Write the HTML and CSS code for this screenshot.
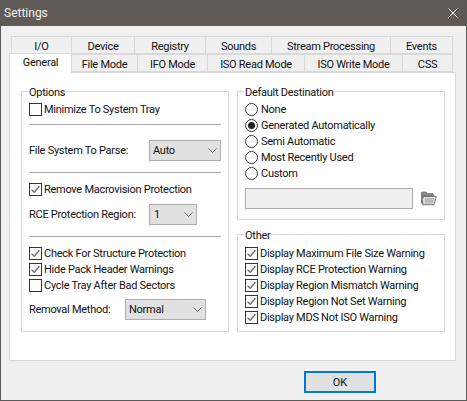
FILE: index.html
```html
<!DOCTYPE html>
<html lang="en">
<head>
  <meta charset="UTF-8" />
  <meta name="viewport" content="width=device-width, initial-scale=1.0" />
  <title>Settings</title>
  <link rel="stylesheet" href="styles.css">
</head>
<body>
  <svg class="defs" width="0" height="0">
    <symbol id="check" viewBox="0 0 11 11">
      <path d="M1.5 5.5 L4.2 8.2 L9.5 2" fill="none" stroke="#6d6d6d" stroke-width="1.3" />
    </symbol>
    <symbol id="chevron" viewBox="0 0 9 5">
      <path d="M0.5 0.5 L4.5 4.5 L8.5 0.5" fill="none" stroke="#666" stroke-width="1" />
    </symbol>
  </svg>
  <div class="window">
    <div class="titlebar">
      <span>Settings</span>
      <svg class="close" width="10" height="10" viewBox="0 0 10 10">
        <path d="M0.5 0.5 L9.5 9.5 M9.5 0.5 L0.5 9.5" stroke="#fff" stroke-width="1" />
      </svg>
    </div>
    <div class="client">
      <div class="tabs">
        <div class="tab-row row-back">
          <div class="tab w-io">I/O</div>
          <div class="tab w-device">Device</div>
          <div class="tab w-registry">Registry</div>
          <div class="tab w-sounds">Sounds</div>
          <div class="tab w-stream">Stream Processing</div>
          <div class="tab w-events">Events</div>
        </div>
        <div class="tab-row row-front">
          <div class="tab selected">General</div>
          <div class="tab w-file">File Mode</div>
          <div class="tab w-ifo">IFO Mode</div>
          <div class="tab w-read">ISO Read Mode</div>
          <div class="tab w-write">ISO Write Mode</div>
          <div class="tab w-css">CSS</div>
        </div>
      </div>
      <div class="panel">
        <fieldset class="group options">
          <legend>Options</legend>
          <div class="check first"><span class="box"></span>Minimize To System Tray</div>
          <hr class="sep sep-1">
          <div class="field field-fs">
            <span class="field-label">File System To Parse:</span>
            <div class="combo combo-fs">Auto<svg class="chev"><use href="#chevron" /></svg></div>
          </div>
          <hr class="sep sep-2">
          <div class="check check-macro"><span class="box"><svg><use href="#check" /></svg></span>Remove Macrovision Protection</div>
          <div class="field field-rce">
            <span class="field-label">RCE Protection Region:</span>
            <div class="combo combo-rce">1<svg class="chev"><use href="#chevron" /></svg></div>
          </div>
          <hr class="sep sep-3">
          <div class="check"><span class="box"><svg><use href="#check" /></svg></span>Check For Structure Protection</div>
          <div class="check"><span class="box"><svg><use href="#check" /></svg></span>Hide Pack Header Warnings</div>
          <div class="check"><span class="box"></span>Cycle Tray After Bad Sectors</div>
          <div class="field field-removal">
            <span class="field-label">Removal Method:</span>
            <div class="combo combo-removal">Normal<svg class="chev"><use href="#chevron" /></svg></div>
          </div>
        </fieldset>
        <div class="right-col">
          <fieldset class="group destination">
            <legend>Default Destination</legend>
            <div class="check first"><span class="radio"></span>None</div>
            <div class="check"><span class="radio on"></span>Generated Automatically</div>
            <div class="check"><span class="radio"></span>Semi Automatic</div>
            <div class="check"><span class="radio"></span>Most Recently Used</div>
            <div class="check"><span class="radio"></span>Custom</div>
            <div class="path-row">
              <div class="path-box"></div>
              <svg class="folder" width="17" height="15" viewBox="0 0 17 15">
                <path d="M1 3 L2 1 H6 L7.5 2.5 H13 L14 5 H3 Z" fill="#8c8c8c" stroke="#666" stroke-width="0.7" />
                <path d="M1 3 V12 L3 14 H13 L13.5 5 Z" fill="#7d7d7d" />
                <path d="M4 5.5 H16.3 L14 13.7 H3 L2 8 Z" fill="#dcdcdc" stroke="#6a6a6a" stroke-width="0.8" />
                <path d="M5 7 H14.5 L13 12.5 H5 Z" fill="#bdbdbd" />
              </svg>
            </div>
          </fieldset>
          <fieldset class="group other">
            <legend>Other</legend>
            <div class="check first-other"><span class="box"><svg><use href="#check" /></svg></span>Display Maximum File Size Warning</div>
            <div class="check"><span class="box"><svg><use href="#check" /></svg></span>Display RCE Protection Warning</div>
            <div class="check"><span class="box"><svg><use href="#check" /></svg></span>Display Region Mismatch Warning</div>
            <div class="check"><span class="box"><svg><use href="#check" /></svg></span>Display Region Not Set Warning</div>
            <div class="check"><span class="box"><svg><use href="#check" /></svg></span>Display MDS Not ISO Warning</div>
          </fieldset>
        </div>
      </div>
      <div class="footer">
        <button type="button" class="ok">OK</button>
      </div>
    </div>
  </div>
</body>
</html>
```

FILE: styles.css
```css
* {
  box-sizing: border-box;
}
html, body {
  margin: 0;
  padding: 0;
}
body {
  width: 467px;
  height: 401px;
  overflow: hidden;
  font-family: Roboto, sans-serif;
  font-size: 11px;
  letter-spacing: -0.27px;
  color: #111;
}
.defs {
  display: block;
  height: 0;
}
.window {
  width: 467px;
  height: 401px;
  display: flex;
  flex-direction: column;
  border: 1px solid #5d5955;
  border-top: 0;
  background-color: #f0f0f0;
}
.titlebar {
  height: 26px;
  background-color: #5f5a55;
  color: #f2f2f2;
  font-size: 12px;
  letter-spacing: 0;
  display: flex;
  align-items: center;
  justify-content: space-between;
  padding: 0 8px 0 3px;
  flex: none;
}
.client {
  padding: 10px 10px 0 8px;
}

/* tabs */
.tabs {
  height: 36px;
}
.tab-row {
  display: flex;
  height: 18px;
}
.row-back {
  padding-left: 2px;
}
.row-front {
  height: 20px;
  margin-top: -2px;
  align-items: flex-end;
}
.tab {
  height: 18px;
  background-color: #f0f0f0;
  border: 1px solid #d9d9d9;
  border-left: 0;
  display: flex;
  align-items: center;
  justify-content: center;
  padding-top: 3px;
}
.row-back .tab:first-child {
  border-left: 1px solid #d9d9d9;
}
.tab.selected {
  width: 63px;
  height: 20px;
  background-color: #fff;
  border: 1px solid #d9d9d9;
  border-bottom: 0;
  position: relative;
  z-index: 1;
  margin-bottom: -1px;
  padding: 0 0 3px 0;
}
.w-io { width: 61px; }
.w-device { width: 63px; }
.w-registry { width: 71px; }
.w-sounds { width: 66px; }
.w-stream { width: 119px; }
.w-events { width: 62px; }
.w-file { width: 66px; }
.w-ifo { width: 70px; }
.w-read { width: 97px; }
.w-write { width: 98px; }
.w-css { width: 50px; }

/* main panel */
.panel {
  width: 447px;
  height: 289px;
  background-color: #fff;
  border: 1px solid #d9d9d9;
  padding: 9px 10px 0 11px;
  display: flex;
  gap: 8px;
  align-items: flex-start;
}
.group {
  margin: 0;
  width: 208px;
  border: 1px solid #d9d9d9;
  padding: 0 7px;
  min-width: 0;
}
.group legend {
  padding: 4px 1px 0;
  margin-left: -1px;
  line-height: 14px;
}
.options {
  height: 250px;
}
.right-col {
  display: flex;
  flex-direction: column;
  gap: 5px;
}
.destination {
  height: 138px;
}
.other {
  height: 107px;
}
.check {
  display: flex;
  align-items: center;
  height: 16px;
  white-space: nowrap;
}
.check.first {
  margin-top: 1px;
}
.check.first-other {
  margin-top: 2px;
}
.box {
  width: 13px;
  height: 13px;
  border: 1px solid #333;
  background-color: #fff;
  margin-right: 2px;
  flex: none;
  display: block;
}
.box svg {
  display: block;
  width: 11px;
  height: 11px;
}
.radio {
  width: 13px;
  height: 13px;
  border: 1px solid #333;
  border-radius: 50%;
  background-color: #fff;
  margin-right: 3px;
  flex: none;
  display: flex;
  align-items: center;
  justify-content: center;
}
.radio.on::after {
  content: "";
  width: 7px;
  height: 7px;
  border-radius: 50%;
  background-color: #222;
}
.sep {
  border: 0;
  height: 1px;
  background-color: #a8a8a8;
  margin: 0;
}
.sep-1 { margin-top: 7px; }
.sep-2 { margin-top: 11px; }
.sep-3 { margin-top: 11px; }
.check-macro { margin-top: 8px; }
.field {
  display: flex;
  align-items: center;
}
.field-fs { margin-top: 15px; }
.field-rce { margin-top: 7px; }
.field-removal { margin-top: 6px; }
.field-label {
  width: 120px;
}
.field-removal .field-label {
  width: 96px;
}
.sep-3 + .check { margin-top: 8px; }
.combo {
  height: 21px;
  background-color: #e1e1e1;
  border: 1px solid #adadad;
  display: flex;
  align-items: center;
  justify-content: space-between;
  padding: 0 3px 0 3px;
}
.combo-fs { width: 72px; }
.combo-rce { width: 48px; padding-left: 4px; }
.combo-removal { width: 81px; }
.chev {
  width: 9px;
  height: 5px;
}
.path-row {
  display: flex;
  align-items: center;
  margin-top: 7px;
  gap: 7px;
}
.path-box {
  width: 169px;
  height: 21px;
  background-color: #f0f0f0;
  border: 1px solid #adadad;
}
.folder {
  flex: none;
}
.footer {
  display: flex;
  justify-content: flex-end;
  padding: 10px 80px 0 0;
}
.ok {
  width: 72px;
  height: 22px;
  background-color: #e1e1e1;
  border: 2px solid #0078d7;
  font-family: Roboto, sans-serif;
  font-size: 11px;
  color: #111;
  padding: 0;
}
```
